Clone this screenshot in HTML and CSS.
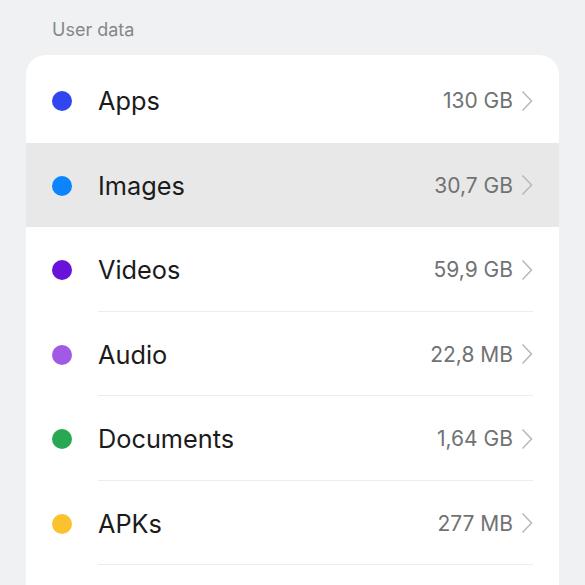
FILE: index.html
```html
<!DOCTYPE html>
<html>
<head>
<meta charset="utf-8">
<link rel="stylesheet" href="styles.css">
</head>
<body>
<div class="section-title">User data</div>
<div class="card">
  <div class="row no-sep">
    <span class="dot" style="background:#3047ef"></span>
    <div class="main"><span class="label">Apps</span><span class="value">130 GB</span><svg class="chev" viewBox="0 0 12 22"><path d="M1.5 1.5 L10.5 11 L1.5 20.5"/></svg></div>
  </div>
  <div class="row active no-sep">
    <span class="dot" style="background:#0b84fe"></span>
    <div class="main"><span class="label">Images</span><span class="value">30,7 GB</span><svg class="chev" viewBox="0 0 12 22"><path d="M1.5 1.5 L10.5 11 L1.5 20.5"/></svg></div>
  </div>
  <div class="row">
    <span class="dot" style="background:#6912d9"></span>
    <div class="main"><span class="label">Videos</span><span class="value">59,9 GB</span><svg class="chev" viewBox="0 0 12 22"><path d="M1.5 1.5 L10.5 11 L1.5 20.5"/></svg></div>
  </div>
  <div class="row">
    <span class="dot" style="background:#a05ae6"></span>
    <div class="main"><span class="label">Audio</span><span class="value">22,8 MB</span><svg class="chev" viewBox="0 0 12 22"><path d="M1.5 1.5 L10.5 11 L1.5 20.5"/></svg></div>
  </div>
  <div class="row">
    <span class="dot" style="background:#28a853"></span>
    <div class="main"><span class="label">Documents</span><span class="value">1,64 GB</span><svg class="chev" viewBox="0 0 12 22"><path d="M1.5 1.5 L10.5 11 L1.5 20.5"/></svg></div>
  </div>
  <div class="row">
    <span class="dot" style="background:#fbc12e"></span>
    <div class="main"><span class="label">APKs</span><span class="value">277 MB</span><svg class="chev" viewBox="0 0 12 22"><path d="M1.5 1.5 L10.5 11 L1.5 20.5"/></svg></div>
  </div>
</div>
</body>
</html>
```
FILE: styles.css
```css
html, body {
  margin: 0;
  padding: 0;
  background: #f0f1f3;
  font-family: Inter, "Noto Sans", sans-serif;
  height: 585px;
  overflow: hidden;
}
.section-title {
  padding: 19px 0 0 52px;
  height: 55px;
  box-sizing: border-box;
  font-size: 18px;
  line-height: 22px;
  color: #858789;
}
.card {
  margin: 0 26px;
  background: #ffffff;
  border-radius: 20px 20px 0 0;
  padding-top: 3px;
  overflow: hidden;
  height: 530px;
  box-sizing: border-box;
}
.row {
  height: 84.5px;
  box-sizing: border-box;
  padding-top: 2px;
  display: flex;
  align-items: stretch;
  padding-left: 26px;
}
.row.active {
  background: #e8e8e8;
}
.dot {
  width: 20px;
  height: 20px;
  border-radius: 50%;
  align-self: center;
  margin-right: 26px;
  flex: none;
}
.main {
  flex: 1;
  display: flex;
  align-items: center;
  margin-right: 26px;
  border-bottom: 1px solid #ececec;
}
.no-sep .main {
  border-bottom-color: transparent;
}
.label {
  flex: 1;
  font-size: 25.3px;
  color: #1b1b1b;
}
.value {
  font-size: 21px;
  color: #707274;
  margin-right: 8px;
}
.chev {
  width: 12px;
  height: 22px;
  fill: none;
  stroke: #b9babc;
  stroke-width: 1.6;
}
```
